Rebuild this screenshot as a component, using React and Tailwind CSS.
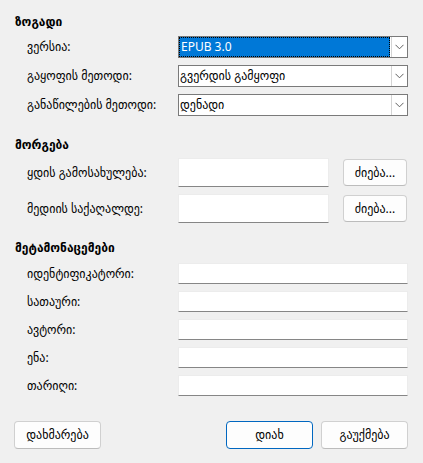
import React from "react";

const Chevron = () => (
  <svg width="9" height="6" viewBox="0 0 9 6" fill="none">
    <path d="M0.5 0.8 L4.5 4.8 L8.5 0.8" stroke="#606060" strokeWidth="1" />
  </svg>
);

const Combo = ({ value, selected }) => (
  <div className="flex h-[22px] w-[230px] border border-[#7a7a7a] bg-white">
    <div
      className={`flex-1 flex items-center pl-[1px] ${
        selected ? "bg-[#0078d7] text-white border border-dotted border-black" : "text-black"
      }`}
    >
      <span className="leading-none">{value}</span>
    </div>
    <div className="w-[16px] flex items-center justify-center border-l border-[#d4d4d4] ml-[1px]">
      <Chevron />
    </div>
  </div>
);

const Field = ({ className = "" }) => (
  <div className={`bg-white border border-[#ececec] border-b-[#868686] ${className}`}></div>
);

const Button = ({ children, primary, className = "" }) => (
  <button
    className={`flex items-center justify-center rounded-[4px] bg-[#fdfdfd] border text-black ${
      primary ? "border-[#0067c0]" : "border-[#d0d0d0] border-b-[#bcbcbc]"
    } ${className}`}
  >
    {children}
  </button>
);

const Row = ({ label, children, className = "" }) => (
  <div className={`flex items-center ${className}`}>
    <div className="w-[163px] pl-[12px] text-black">{label}</div>
    {children}
  </div>
);

export default function App() {
  return (
    <div
      className="w-[423px] h-[463px] bg-[#f0f0f0] px-[15px] pt-[14px] text-[12px] overflow-hidden"
      style={{ fontFamily: '"Noto Sans", "DejaVu Sans", sans-serif' }}
    >
      {/* General */}
      <div className="h-[16px] leading-[16px] font-bold">ზოგადი</div>
      <div className="mt-[6px] flex flex-col gap-[7px]">
        <Row label="ვერსია:">
          <Combo value="EPUB 3.0" selected />
        </Row>
        <Row label="გაყოფის მეთოდი:">
          <Combo value="გვერდის გამყოფი" />
        </Row>
        <Row label="განაწილების მეთოდი:">
          <Combo value="დენადი" />
        </Row>
      </div>

      {/* Customize */}
      <div className="mt-[21px] h-[16px] leading-[16px] font-bold">მორგება</div>
      <div className="mt-[5px] flex flex-col gap-[7px]">
        <Row label="ყდის გამოსახულება:" className="h-[29px]">
          <Field className="w-[151px] h-[29px]" />
          <Button className="ml-[14px] w-[64px] h-[27px]">ძიება...</Button>
        </Row>
        <Row label="მედიის საქაღალდე:" className="h-[29px]">
          <Field className="w-[151px] h-[29px]" />
          <Button className="ml-[14px] w-[64px] h-[27px]">ძიება...</Button>
        </Row>
      </div>

      {/* Metadata */}
      <div className="mt-[17px] h-[16px] leading-[16px] font-bold">მეტამონაცემები</div>
      <div className="mt-[7px] flex flex-col gap-[7px]">
        {["იდენტიფიკატორი:", "სათაური:", "ავტორი:", "ენა:", "თარიღი:"].map((l) => (
          <Row key={l} label={l} className="h-[21px]">
            <Field className="w-[230px] h-[21px]" />
          </Row>
        ))}
      </div>

      {/* Buttons */}
      <div className="mt-[25px] flex items-center">
        <Button className="w-[87px] h-[28px] -ml-[1px]">დახმარება</Button>
        <div className="flex-1"></div>
        <Button primary className="w-[87px] h-[28px]">დიახ</Button>
        <Button className="ml-[8px] w-[87px] h-[28px]">გაუქმება</Button>
      </div>
    </div>
  );
}
